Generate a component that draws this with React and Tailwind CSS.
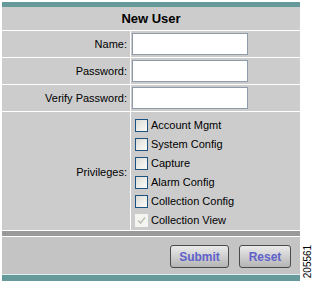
import { useState } from "react";

const privileges = [
  { label: "Account Mgmt" },
  { label: "System Config" },
  { label: "Capture" },
  { label: "Alarm Config" },
  { label: "Collection Config" },
  { label: "Collection View", locked: true },
];

function Box({ checked, locked, onClick }) {
  if (locked) {
    return (
      <span className="w-[13px] h-[13px] bg-[#f4f4f0] flex items-center justify-center">
        <svg width="9" height="9" viewBox="0 0 9 9">
          <path d="M1 4.5 L3.5 7 L8 1.5" fill="none" stroke="#c2c2bc" strokeWidth="1.6" />
        </svg>
      </span>
    );
  }
  return (
    <span
      onClick={onClick}
      className="w-[13px] h-[13px] border border-[#1c5180] bg-gradient-to-br from-[#dcdcd6] to-[#fbfbfa] flex items-center justify-center"
    >
      {checked && (
        <svg width="9" height="9" viewBox="0 0 9 9">
          <path d="M1 4.5 L3.5 7 L8 1.5" fill="none" stroke="#21a121" strokeWidth="1.6" />
        </svg>
      )}
    </span>
  );
}

function Field({ label, type }) {
  return (
    <>
      <div className="bg-[#cccccc] h-[26px] flex items-center justify-end pr-[3px]">{label}</div>
      <div className="bg-[#cccccc] h-[26px] flex items-center pl-px">
        <input
          type={type}
          className="w-[116px] h-[22px] bg-white border border-[#8d9bab] outline-none px-1 text-[11px]"
        />
      </div>
    </>
  );
}

export default function App() {
  const [checked, set_checked] = useState({});

  return (
    <div
      className="relative w-[314px] h-[283px] bg-white text-[11px] text-black"
      style={{ fontFamily: '"Liberation Sans", Arial, sans-serif' }}
    >
      <div className="ml-[2px] w-[298px] pt-[2px] flex flex-col">
        <div className="h-[5px] bg-[#669999]" />
        <div className="h-[23px] bg-[#cccccc] flex items-center justify-center font-bold text-[13px]">
          New User
        </div>
        <div className="grid grid-cols-[128px_1fr] gap-x-[1px] gap-y-px bg-white pt-px pb-px">
          <Field label="Name:" type="text" />
          <Field label="Password:" type="password" />
          <Field label="Verify Password:" type="password" />

          <div className="bg-[#cccccc] h-[118px] flex items-center justify-end pr-[3px] pt-[2px]">
            Privileges:
          </div>
          <div className="bg-[#cccccc] h-[118px] flex flex-col pt-[7px] pl-[4px] gap-[6px]">
            {privileges.map((p) => (
              <label key={p.label} className="flex items-center gap-[3px] h-[13px]">
                <Box
                  locked={p.locked}
                  checked={checked[p.label]}
                  onClick={() => set_checked({ ...checked, [p.label]: !checked[p.label] })}
                />
                <span>{p.label}</span>
              </label>
            ))}
          </div>
        </div>
        <div className="h-[5px] bg-[#999999]" />
        <div className="h-px bg-white" />
        <div className="h-[37px] bg-[#c4c4c4] flex items-center justify-end gap-[10px] pr-[9px] pt-[2px]">
          <button className="w-[59px] h-[23px] rounded-[3px] border border-[#4a4a4a] bg-gradient-to-b from-[#ebebeb] to-[#b4b4b4] text-[#6161cc] font-bold text-[12px]">
            Submit
          </button>
          <button className="w-[52px] h-[23px] rounded-[3px] border border-[#4a4a4a] bg-gradient-to-b from-[#ebebeb] to-[#b4b4b4] text-[#6161cc] font-bold text-[12px]">
            Reset
          </button>
        </div>
        <div className="h-px bg-[#ddeeee]" />
        <div className="h-[6px] bg-[#669999]" />
      </div>
      <div className="absolute left-[302px] top-[241px] w-[12px] h-[40px] flex items-center justify-center">
        <span className="-rotate-90 text-[10px] whitespace-nowrap">205561</span>
      </div>
    </div>
  );
}
